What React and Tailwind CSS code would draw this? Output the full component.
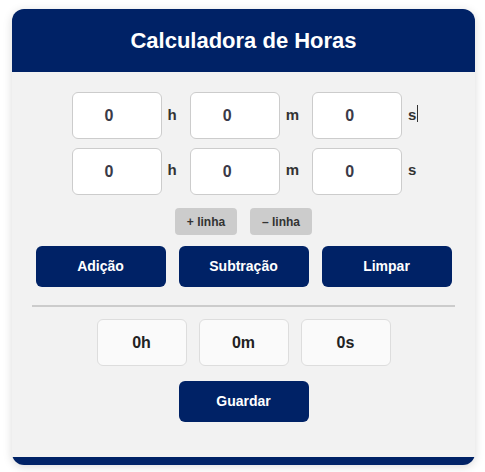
import React from "react";

const font = { fontFamily: '"Liberation Sans", Arial, sans-serif' };

function Row({ showCaret }) {
  const units = ["h", "m", "s"];
  return (
    <div className="flex items-center justify-center">
      {units.map((u, i) => (
        <div key={u} className="flex items-center">
          <div className="w-[90px] h-[47px] bg-white border border-[#cccccc] rounded-[6px] flex items-center justify-center pr-[15px] text-[16px] font-bold text-[#3a3a48]">
            0
          </div>
          <span className={`ml-[6px] ${i < 2 ? "mr-[13px]" : ""} text-[15px] font-bold text-[#333333] relative ${showCaret ? "" : "-top-[1px]"}`}>
            {u}
            {showCaret && i === 2 ? (
              <span className="absolute left-[9px] top-[1px] w-[1px] h-[17px] bg-[#333]" />
            ) : null}
          </span>
        </div>
      ))}
    </div>
  );
}

export default function App() {
  return (
    <div className="min-h-[472px] bg-white pt-[9px] px-[12px]" style={font}>
      <div className="w-[463px] h-[456px] rounded-[12px] overflow-hidden bg-[#f2f2f2] shadow-[0_2px_10px_rgba(0,0,0,0.15)] flex flex-col">
        <div className="h-[63px] bg-[#002266] flex items-center justify-center shrink-0">
          <h1 className="text-white text-[22px] font-bold">Calculadora de Horas</h1>
        </div>
        <div className="flex-1 flex flex-col items-center pt-[20px]">
          <div className="flex flex-col gap-[9px] pl-[1px]">
            <Row showCaret />
            <Row />
          </div>
          <div className="flex gap-[13px] mt-[13px]">
            <button className="w-[62px] h-[27px] rounded-[4px] bg-[#cccccc] text-[12px] font-bold text-[#333333]">+ linha</button>
            <button className="w-[62px] h-[27px] rounded-[4px] bg-[#cccccc] text-[12px] font-bold text-[#333333]">– linha</button>
          </div>
          <div className="flex gap-[13px] mt-[11px]">
            {["Adição", "Subtração", "Limpar"].map((t) => (
              <button key={t} className="w-[130px] h-[41px] rounded-[6px] bg-[#002266] text-white text-[14px] font-bold">
                {t}
              </button>
            ))}
          </div>
          <div className="w-[423px] h-[2px] bg-[#cccccc] mt-[18px]" />
          <div className="flex gap-[12px] mt-[12px]">
            {["0h", "0m", "0s"].map((t) => (
              <div key={t} className="w-[90px] h-[47px] rounded-[6px] bg-[#fafafa] border border-[#dddddd] flex items-center justify-center text-[16px] font-bold text-[#222222]">
                {t}
              </div>
            ))}
          </div>
          <button className="w-[130px] h-[41px] rounded-[6px] bg-[#002266] text-white text-[14px] font-bold mt-[15px]">
            Guardar
          </button>
        </div>
        <div className="h-[8px] bg-[#002266] shrink-0" />
      </div>
    </div>
  );
}
